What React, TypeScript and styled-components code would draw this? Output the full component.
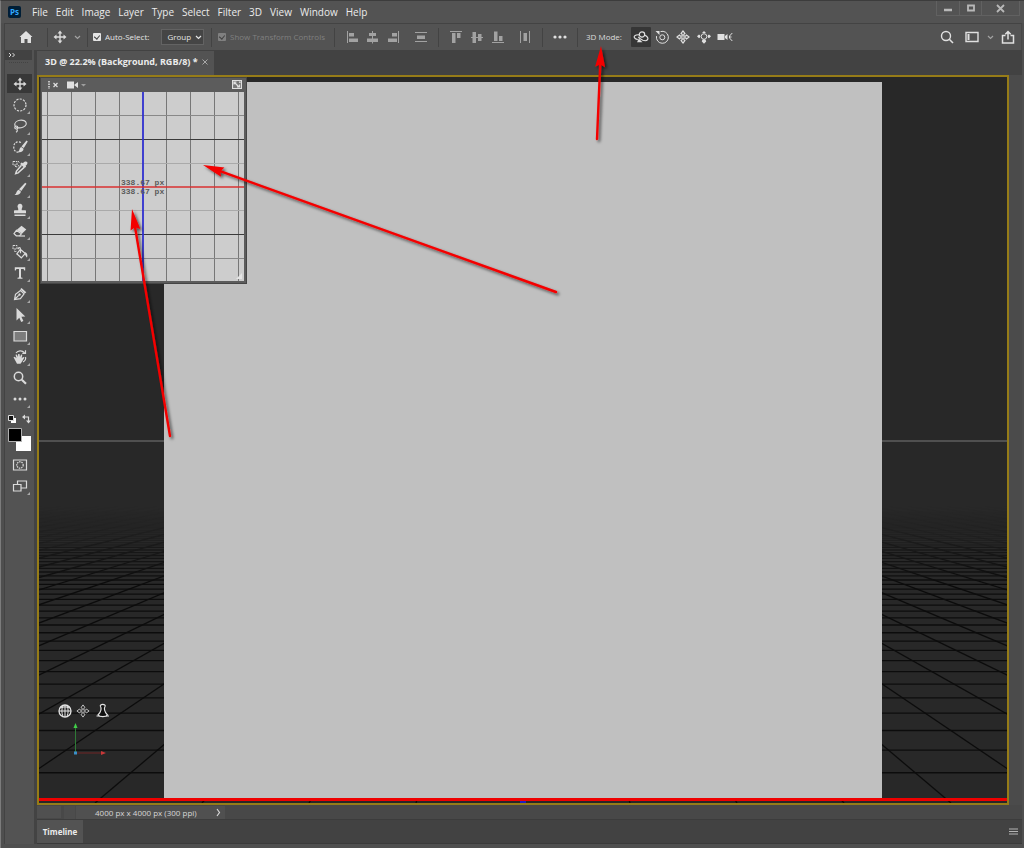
import React from "react";
import styled, { createGlobalStyle } from "styled-components";

const GlobalStyle = createGlobalStyle`
  *, *::before, *::after { box-sizing: border-box; }
  body { margin: 0; background: #4b4b4b; }
  button, input, select { font: inherit; color: inherit; }
`;

const uiFont = `"Open Sans", "Noto Sans", sans-serif`;

const Window = styled.div`
  position: relative;
  min-height: 100vh;
  display: flex;
  flex-direction: column;
  background: #4f4f4f;
  border-left: 1px solid #7c7c7c;
  border-top: 1px solid #3c3c3c;
  font-family: ${uiFont};
  font-size: 8px;
  line-height: 12px;
  color: #dcdcdc;
  overflow: hidden;
`;

const TitleBar = styled.header`
  display: flex;
  align-items: center;
  height: 22px;
  padding: 0 4px 0 7px;
  background: #535353;
`;

const Logo = styled.div`
  width: 13px;
  height: 12px;
  border-radius: 2px;
  background: #001e36;
  color: #31a8ff;
  font-size: 8px;
  font-weight: 700;
  line-height: 11px;
  text-align: center;
`;

const Menu = styled.nav`
  display: flex;
  gap: 8px;
  margin-left: 11px;
  font-size: 10px;
  line-height: 14px;
`;

const MenuItem = styled.button`
  padding: 0;
  border: 0;
  background: none;
  color: #ececec;
`;

const WindowControls = styled.div`
  display: flex;
  align-self: flex-start;
  margin-left: auto;
  height: 15px;
  border: 1px solid #616161;
  border-top: 0;
`;

const WindowButton = styled.button<{ $w: number }>`
  display: grid;
  place-items: center;
  width: ${(p) => p.$w}px;
  padding: 0;
  border: 0;
  background: none;
  color: #b8b8b8;
  & + & { border-left: 1px solid #616161; }
`;

const OptionsBar = styled.div`
  display: flex;
  align-items: center;
  height: 27px;
  margin: 0 2px 0 3px;
  background: #535353;
  border-top: 1px solid #434343;
  border-left: 1px solid #434343;
  border-right: 1px solid #484848;
`;

const Separator = styled.span`
  flex: none;
  width: 1px;
  height: 19px;
  background: #434343;
`;

const IconButton = styled.button<{ $w: number; $active?: boolean; $dim?: boolean }>`
  flex: none;
  display: grid;
  place-items: center;
  width: ${(p) => p.$w}px;
  height: 20px;
  padding: 0;
  border: 0;
  border-radius: 1px;
  background: ${(p) => (p.$active ? "#363636" : "none")};
  color: ${(p) => (p.$dim ? "#a2a2a2" : "#e0e0e0")};
`;

const Group = styled.div<{ $w: number; $pad?: number }>`
  flex: none;
  display: flex;
  align-items: center;
  width: ${(p) => p.$w}px;
  padding-left: ${(p) => p.$pad ?? 0}px;
`;

const CheckLabel = styled.label<{ $off?: boolean }>`
  display: flex;
  align-items: center;
  gap: 4px;
  white-space: nowrap;
  color: ${(p) => (p.$off ? "#808080" : "#e4e4e4")};
`;

const CheckBox = styled.input`
  appearance: none;
  position: relative;
  width: 8px;
  height: 8px;
  margin: 0;
  border-radius: 1px;
  background: currentColor;
  &::after {
    content: "";
    position: absolute;
    left: 2px;
    top: 1px;
    width: 4px;
    height: 5px;
    border: solid #404040;
    border-width: 0 1px 1px 0;
    transform: rotate(40deg);
  }
`;

const SelectWrap = styled.div`
  position: relative;
  margin-left: 12px;
  color: #e4e4e4;
  svg { position: absolute; right: 2px; top: 6px; pointer-events: none; }
`;

const Select = styled.select`
  appearance: none;
  display: block;
  width: 43px;
  height: 16px;
  padding: 0 0 0 5px;
  border: 1px solid #636363;
  background: #454545;
`;

const RightGroup = styled.div`
  display: flex;
  align-items: center;
  margin-left: auto;
`;

const Body = styled.div`
  flex: 1;
  display: flex;
  margin: 0 2px 4px 3px;
`;

const Tools = styled.aside`
  flex: none;
  display: flex;
  flex-direction: column;
  width: 33px;
  padding-right: 2px;
  background: #535353;
  border-left: 1px solid #434343;
  border-right: 3px solid #434343;
`;

const ToolsHeader = styled.button`
  height: 10px;
  padding: 0 0 0 3px;
  border: 0;
  background: #424242;
  text-align: left;
  line-height: 0;
`;

const Grip = styled.div`
  height: 3px;
  margin: 2px 4px 9px;
  border-top: 1px dotted #434343;
`;

const ToolList = styled.div`
  display: flex;
  flex-direction: column;
  gap: 2px;
  padding-left: 2px;
`;

const ToolButton = styled.button<{ $active?: boolean; $more?: boolean }>`
  position: relative;
  display: grid;
  place-items: center;
  width: 25px;
  height: 19px;
  padding: 0;
  border: 0;
  background: ${(p) => (p.$active ? "#383838" : "none")};
  color: #dadada;
  &::after {
    content: "";
    display: ${(p) => (p.$more ? "block" : "none")};
    position: absolute;
    right: 2px;
    bottom: 0;
    border-left: 3px solid transparent;
    border-bottom: 3px solid #a8a8a8;
  }
`;

const Swatches = styled.div`
  height: 41px;
  margin-bottom: 2px;
  svg { display: block; }
`;

const Main = styled.main`
  flex: 1;
  min-width: 0;
  display: flex;
  flex-direction: column;
  background: #424242;
`;

const TabBar = styled.div`
  display: flex;
  height: 25px;
  padding-top: 1px;
  background: #424242;
`;

const DocTab = styled.div`
  display: flex;
  align-items: center;
  gap: 4px;
  padding: 0 6px 2px 8px;
  background: #535353;
  color: #ececec;
  font-weight: 700;
  font-size: 9px;
  white-space: nowrap;
`;

const CloseButton = styled.button`
  padding: 0;
  border: 0;
  background: none;
  line-height: 0;
  color: #a8a8a8;
`;

const Workspace = styled.div`
  flex: 1;
  display: flex;
`;

const Viewport = styled.section`
  position: relative;
  flex: 1;
  display: flex;
  min-width: 0;
  padding: 5px 125px;
  border: 2px solid #967c18;
  background: #282828;
`;

const Floor = styled.svg`
  position: absolute;
  inset: 0;
  width: 100%;
  height: 100%;
`;

const Page = styled.div`
  position: relative;
  flex: 1;
  background: #c0c0c0;
`;

const ScrollTrack = styled.div`
  flex: none;
  width: 13px;
  background: #4b4b4b;
`;

const SecondaryView = styled.div`
  position: absolute;
  left: 1px;
  top: 0;
  width: 207px;
  padding: 1px 2px 2px 1px;
  background: #5c5c5c;
  border: 1px solid #454545;
`;

const ViewHeader = styled.div`
  display: flex;
  align-items: center;
  height: 13px;
  padding: 0 2px 2px 5px;
  color: #e0e0e0;
`;

const ViewButton = styled.button<{ $push?: boolean; $gap?: number }>`
  padding: 0;
  border: 0;
  background: none;
  line-height: 0;
  margin-left: ${(p) => (p.$push ? "auto" : `${p.$gap ?? 0}px`)};
`;

const ViewCanvas = styled.div`
  position: relative;
  height: 189px;
  background: #cdcdcd;
  svg { display: block; }
`;

const Dimensions = styled.div`
  position: absolute;
  left: 79px;
  top: 86px;
  color: #5a5a5a;
  font-family: "Liberation Mono", monospace;
  font-size: 8px;
  font-weight: 700;
  line-height: 9px;
`;

const NavWidget = styled.div`
  position: absolute;
  left: 17px;
  bottom: 42px;
`;

const StatusBar = styled.footer`
  display: flex;
  height: 15px;
  padding-top: 1px;
  background: #484848;
  border-bottom: 1px solid #3c3c3c;
`;

const ZoomField = styled.input`
  width: 24px;
  height: 12px;
  padding: 0;
  border: 0;
  background: #505050;
`;

const StatusGap = styled.span`
  width: 11px;
  margin-left: 3px;
  background: #4d4d4d;
`;

const DocInfo = styled.button`
  display: flex;
  align-items: center;
  justify-content: space-between;
  width: 149px;
  height: 13px;
  padding: 0 4px 0 19px;
  margin-left: 1px;
  border: 0;
  background: #505050;
  color: #d6d6d6;
  white-space: nowrap;
`;

const Timeline = styled.div`
  display: flex;
  align-items: center;
  height: 24px;
  padding-right: 4px;
  background: #424242;
  border-bottom: 1px solid #3a3a3a;
`;

const TimelineTab = styled.button`
  align-self: stretch;
  width: 46px;
  padding: 0;
  border: 0;
  background: #535353;
  color: #ececec;
  font-weight: 700;
`;

const PanelMenu = styled.button`
  margin-left: auto;
  padding: 0;
  border: 0;
  background: none;
  line-height: 0;
  color: #b4b4b4;
`;

const Annotations = styled.svg`
  position: absolute;
  left: -1px;
  top: -1px;
  pointer-events: none;
`;

type DrawingProps = { w?: number; h?: number; children: React.ReactNode };

const Icon = ({ w = 16, h = 16, children }: DrawingProps) => (
  <svg width={w} height={h} viewBox={`0 0 ${w} ${h}`} fill="none" stroke="currentColor" strokeWidth="1.2" aria-hidden="true">
    {children}
  </svg>
);

const Chevron = () => (
  <Icon w={7} h={5}><path d="M1 1l2.500 2.500L6 1" /></Icon>
);

const MoveGlyph = () => (
  <>
    <path d="M8 3v10M3 8h10" strokeWidth="1.400" />
    <path d="M8 1.500l2.400 3H5.600zM8 14.500l2.400-3H5.600zM1.500 8l3-2.400v4.800zM14.500 8l-3-2.400v4.800z" fill="currentColor" stroke="none" />
  </>
);

const solid = { fill: "currentColor", stroke: "none" };

const toolIcons: { name: string; more?: boolean; art: React.ReactNode }[] = [
  { name: "Move", art: <MoveGlyph /> },
  { name: "Elliptical Marquee", more: true, art: <circle cx="8" cy="8" r="6" strokeDasharray="2.200 1.200" /> },
  {
    name: "Lasso", more: true,
    art: (
      <>
        <ellipse cx="8.500" cy="6" rx="5.800" ry="3.800" transform="rotate(-10 8.500 6)" />
        <circle cx="4.300" cy="9.500" r="1.500" />
        <path d="M4.800 11c.9 1.200.6 2.600-.8 3.300" />
      </>
    ),
  },
  {
    name: "Quick Selection", more: true,
    art: (
      <>
        <path d="M6.500 13C3.500 13.500 1.500 11 1.800 7.500 2 4.500 4 2.800 6.500 2.800c1.300 0 2.200.5 2.700 1.300" strokeDasharray="2 1.200" />
        <path {...solid} d="M14.500 1.600l1.300 1-4 6.500-2.300-1.700zM9.200 7.900l2.400 1.800c-.2 2.400-2.600 4.200-5.800 3.300 1.700-.8 1.400-4.100 3.400-5.100z" />
      </>
    ),
  },
  {
    name: "Eyedropper", more: true,
    art: (
      <>
        <path {...solid} d="M11 3.200c1-1.900 3.400-2.200 4.200-1.100.7 1.100-.1 2.900-1.600 3.700l.5.900-1.500 1.400-4.500-4.200 1.500-1.500z" />
        <path d="M9.500 5.300l-5 5.800-.8 2.600 2.400-.8 6-5.500" strokeWidth="1.500" />
        <path d="M1 1.500h4v3.500H1zM3 6.200c2 1.300 3.800.5 4-1.500M6 1l1.500 2" strokeDasharray="2 .8" strokeWidth="1" />
      </>
    ),
  },
  {
    name: "Brush", more: true,
    art: <path {...solid} d="M13.200 1.800l1.300 1-5.200 7.200-2.300-1.800zM6.700 8.700l2.200 1.700c-.3 2.500-2.900 4.100-6.500 3.400 2.200-.7 1.900-4.200 4.300-5.100z" />,
  },
  {
    name: "Clone Stamp", more: true,
    art: <path {...solid} d="M8 1.800a2.500 2.500 0 0 1 2.300 3.500c-.5 1.300-.7 2-.5 3H13c.7 0 1 .4 1 1v2H2V9.300c0-.6.3-1 1-1h3.200c.2-1 0-1.700-.5-3A2.500 2.500 0 0 1 8 1.800zM2.500 12.600h11V14h-11z" />,
  },
  {
    name: "Eraser", more: true,
    art: (
      <>
        <path {...solid} d="M9.500 2.800l4.800 3.600-4.200 4.200L4.600 7z" />
        <path d="M4.400 7.300l5 3.500-2 2H4.300L2 10.600z" />
        <path d="M7.500 13h5.500" />
      </>
    ),
  },
  {
    name: "Paint Bucket", more: true,
    art: (
      <>
        <path d="M8.300 5.300l5 4.200-4 4.300-4.500-4zM8.500 9.300V5.200c0-2-2.300-2-2.300 0" />
        <path {...solid} d="M12.700 8.300c2.300.3 3.300 2.500 2.300 5.300-1-.1-1.500-2.500-2.500-3.500z" />
        <path d="M1 1.500h4v3.500H1zM2 6.800c1 .9 2 .9 3 .2" strokeDasharray="2 .8" strokeWidth="1" />
      </>
    ),
  },
  {
    name: "Type", more: true,
    art: <path {...solid} d="M2.800 2.300h10.400v3.200h-1c-.2-1.200-.6-1.600-1.700-1.600H9v7.900c0 .8.400 1 1.500 1v1h-5v-1c1.100 0 1.500-.2 1.500-1V3.900H5.500c-1.100 0-1.500.4-1.700 1.600h-1z" />,
  },
  {
    name: "Pen", more: true,
    art: (
      <>
        <path d="M2.500 13.500l1-5.200 5-3.800 3.600 3.300-3.700 4.900zM2.500 13.500l4.200-4.200" />
        <path {...solid} d="M9.500 2l4.800 4.300-1.400 1.300-4.700-4.300zM6.500 8a1.200 1.200 0 1 1 1.500 1.700A1.200 1.200 0 0 1 6.500 8z" />
      </>
    ),
  },
  { name: "Path Selection", more: true, art: <path {...solid} d="M4.500 1l8.800 8.500-3.900.3 2 4.100-2.200 1-1.900-4.100L4.500 13.400z" /> },
  { name: "Rectangle", more: true, art: <path d="M2 3.500h12.500v9.500H2z" fill="#7c7c7c" /> },
  {
    name: "Rotate View", more: true,
    art: (
      <>
        <path {...solid} d="M1.500 8.200l1.200-.5 1.800 1.500-1-3.400 1.300-.3 1.200 2.500.1-3 1.400-.1.500 3 1.100-2.500 1.200.4-.6 3.400 1.500-1.300 1.300.6-2.900 4.800-1.100 1.500H5z" />
        <path d="M4 4c2-2.500 6-3 8.500-.3M13.500 1.200v3.200h-3.200M13.500 8c.5 2-.5 4-2.500 5" />
      </>
    ),
  },
  {
    name: "Zoom",
    art: (
      <>
        <circle cx="6.500" cy="6.500" r="4.200" strokeWidth="1.500" />
        <path d="M9.800 9.800l4.200 4" strokeWidth="2.200" />
      </>
    ),
  },
  {
    name: "Edit Toolbar", more: true,
    art: (
      <g {...solid}>
        <circle cx="3" cy="8" r="1.500" /><circle cx="8" cy="8" r="1.500" /><circle cx="13" cy="8" r="1.500" />
      </g>
    ),
  },
];

const alignIcons: { name: string; w: number; d: string }[] = [
  { name: "Align left edges", w: 20, d: "M1 1h1v12H1zM3 3h5v3.500H3zM3 8.500h9V12H3z" },
  { name: "Align horizontal centers", w: 21, d: "M6 1h1v2h3v3H7v2.500h5V12H7v1.500H6V12H1V8.500h5V6H3V3h3z" },
  { name: "Align right edges", w: 20, d: "M11 1h1v12h-1zM5 3h5v3.500H5zM1 8.500h9V12H1z" },
  { name: "Distribute vertically", w: 35, d: "M1 2h12v1H1zM3 5.500h8V9H3zM1 11h12v1H1z" },
];

const alignIcons2: { name: string; w: number; d: string }[] = [
  { name: "Align top edges", w: 20, d: "M1 1h12v1H1zM3 3h3.500v10H3zM8 3h3.500v5H8z" },
  { name: "Align vertical centers", w: 22, d: "M1 7h1.500V2H6v5h2V4h3.500v3H13v1h-1.500v3H8V8H6v5H2.500V8H1z" },
  { name: "Align bottom edges", w: 20, d: "M1 12h12v1H1zM3 1.500h3.500V11H3zM8 6h3.500v5H8z" },
  { name: "Distribute horizontally", w: 35, d: "M2 1h1v12H2zM5.500 3H9v8H5.500zM11 1h1v12h-1z" },
];

const PanCross = () => (
  <>
    <path d="M6.200 6.200V4.300L5 3.600 7 .9l2 2.700-1.200.7v1.900h1.900L10.400 5l2.700 2-2.700 2-.7-1.200H7.800v1.900l1.200.7-2 2.700-2-2.700 1.200-.7V7.800H4.300L3.600 9 .9 7l2.700-2 .7 1.200z" strokeLinejoin="round" />
  </>
);

const modeIcons: { name: string; w: number; active?: boolean; art: React.ReactNode }[] = [
  {
    name: "Orbit", w: 20, active: true,
    art: (
      <Icon w={16} h={14}>
        <circle cx="9" cy="4.500" r="2.700" />
        <path d="M6 4.800C2.500 4.500.700 6 1.300 7.500c.4 1 1.700 1.700 3.500 2.200M12 5.200c2.400 1.200 3.500 3 2.600 4.500-1 1.300-3 1.200-4.800.6-2-.8-3.500-2-4.500-3.400" />
        <path {...solid} d="M4 12.300h5.500L5.800 8.500z" />
      </Icon>
    ),
  },
  {
    name: "Roll", w: 22,
    art: (
      <Icon w={14} h={14}>
        <circle cx="7.300" cy="7.300" r="2.500" strokeWidth="1" />
        <path d="M5.500 1.600a6 6 0 1 1-4 4.500" strokeWidth="1" />
        <path {...solid} d="M.5 1h4v4z" />
      </Icon>
    ),
  },
  { name: "Pan", w: 20, art: <Icon w={14} h={14}><PanCross /></Icon> },
  {
    name: "Slide", w: 22,
    art: (
      <Icon w={14} h={14}>
        <circle cx="7" cy="6.500" r="2.800" strokeWidth="1" />
        <path {...solid} d="M7 1l2 2H5zM7 13.800L4.800 11.500a2.200 2.200 0 0 1 4.400 0zM0 6.300L2 4.400a2 2 0 0 1 0 3.800zM14 6.300l-2-1.900a2 2 0 0 0 0 3.800z" />
      </Icon>
    ),
  },
  {
    name: "Zoom camera", w: 20,
    art: (
      <Icon w={16} h={14}>
        <path {...solid} d="M.5 4h7v6h-7zM8 6l2.500-2v6L8 8z" />
        <path d="M15.300 3L12.500 6v2l2.800 3M12.500 7h2" strokeWidth="1" />
      </Icon>
    ),
  },
];

const HORIZON = 364;
const CENTER = 484;
const depthRows = Array.from({ length: 52 }, (_, k) => HORIZON + 4545 / (12.7 + k));
const rays = Array.from({ length: 61 }, (_, k) => k - 30);

const FloorGrid = () => (
  <Floor viewBox="0 0 968 726" preserveAspectRatio="xMidYMin slice" aria-hidden="true">
    <defs>
      <linearGradient id="fog" x1="0" y1="0" x2="0" y2="1">
        <stop offset="0.180" stopColor="#fff" stopOpacity="0" />
        <stop offset="0.300" stopColor="#fff" stopOpacity="0.550" />
        <stop offset="0.400" stopColor="#fff" stopOpacity="1" />
      </linearGradient>
      <mask id="distance" maskUnits="userSpaceOnUse" x="0" y="364" width="968" height="362">
        <rect y="364" width="968" height="362" fill="url(#fog)" />
      </mask>
    </defs>
    <g mask="url(#distance)" stroke="#0c0c0c" strokeWidth="1.300">
      {depthRows.map((y) => (
        <line key={y} x1="0" x2="968" y1={y} y2={y} strokeOpacity={y > 470 ? 1 : 0.600} />
      ))}
      {rays.map((k) => (
        <line key={k} x1={CENTER} y1={HORIZON} x2={CENTER + k * 107} y2="726" strokeOpacity={Math.abs(k) > 14 ? 0.600 : 1} />
      ))}
    </g>
    <path d="M0 364h968" stroke="#5e5e5e" strokeWidth="1.500" />
    <path d="M0 722.500h968" stroke="#ee0000" strokeWidth="3" />
    <path d="M481 725h6" stroke="#2020c0" strokeWidth="2" />
  </Floor>
);

const Arrow = ({ tip, tail }: { tip: [number, number]; tail: [number, number] }) => {
  const dx = tail[0] - tip[0];
  const dy = tail[1] - tip[1];
  const length = Math.hypot(dx, dy);
  const angle = (Math.atan2(dy, dx) * 180) / Math.PI;
  return (
    <g filter="url(#arrowShadow)">
      <g transform={`translate(${tip[0]} ${tip[1]}) rotate(${angle})`}>
        <path d={`M16 0H${length}`} stroke="#f40000" strokeWidth="2.400" strokeLinecap="round" />
        <path d="M0 0L21-5 18.500 0 21 5z" fill="#f40000" />
      </g>
    </g>
  );
};

export default function App() {
  return (
    <>
      <GlobalStyle />
      <Window>
        <TitleBar>
          <Logo>Ps</Logo>
          <Menu>
            {["File", "Edit", "Image", "Layer", "Type", "Select", "Filter", "3D", "View", "Window", "Help"].map((m) => (
              <MenuItem key={m}>{m}</MenuItem>
            ))}
          </Menu>
          <WindowControls>
            <WindowButton $w={22} aria-label="Minimize"><Icon w={10} h={10}><path d="M1 7h8" strokeWidth="2.500" /></Icon></WindowButton>
            <WindowButton $w={22} aria-label="Maximize"><Icon w={10} h={8}><path d="M2 1.500h6v5H2z" strokeWidth="1.800" /></Icon></WindowButton>
            <WindowButton $w={38} aria-label="Close"><Icon w={9} h={9}><path d="M1 1l7 7M8 1L1 8" strokeWidth="1.800" /></Icon></WindowButton>
          </WindowControls>
        </TitleBar>

        <OptionsBar>
          <IconButton $w={42} aria-label="Home">
            <Icon w={14} h={14}><path {...solid} d="M7 1l6.500 6H12v6H8.500V9h-3v4H2V7H.5z" /></Icon>
          </IconButton>
          <Separator />
          <Group $w={39} $pad={4}>
            <Icon><MoveGlyph /></Icon>
            <IconButton $w={18} $dim aria-label="Tool presets"><Chevron /></IconButton>
          </Group>
          <Separator />
          <Group $w={123} $pad={5}>
            <CheckLabel><CheckBox type="checkbox" defaultChecked />Auto-Select:</CheckLabel>
            <SelectWrap>
              <Select aria-label="Auto-select target"><option>Group</option></Select>
              <Chevron />
            </SelectWrap>
          </Group>
          <Separator />
          <Group $w={122} $pad={6}>
            <CheckLabel $off><CheckBox type="checkbox" defaultChecked disabled />Show Transform Controls</CheckLabel>
          </Group>
          <Separator />
          <Group $w={103} $pad={7}>
            {alignIcons.map((a) => (
              <IconButton key={a.name} $w={a.w} $dim aria-label={a.name}><Icon w={13} h={14}><path {...solid} d={a.d} /></Icon></IconButton>
            ))}
          </Group>
          <Separator />
          <Group $w={103} $pad={6}>
            {alignIcons2.map((a) => (
              <IconButton key={a.name} $w={a.w} $dim aria-label={a.name}><Icon w={13} h={14}><path {...solid} d={a.d} /></Icon></IconButton>
            ))}
          </Group>
          <Separator />
          <IconButton $w={34} aria-label="More options">
            <Icon w={14} h={4}><g {...solid}><circle cx="2" cy="2" r="1.600" /><circle cx="7" cy="2" r="1.600" /><circle cx="12" cy="2" r="1.600" /></g></Icon>
          </IconButton>
          <Separator />
          <Group $w={53} $pad={8}>3D Mode:</Group>
          {modeIcons.map((m) => (
            <IconButton key={m.name} $w={m.w} $active={m.active} aria-label={m.name}>{m.art}</IconButton>
          ))}
          <RightGroup>
            <IconButton $w={24} aria-label="Search"><Icon w={14} h={14}><circle cx="6" cy="6" r="4.500" strokeWidth="1.400" /><path d="M9.300 9.300l3.700 3.700" strokeWidth="1.600" /></Icon></IconButton>
            <IconButton $w={26} aria-label="Workspace"><Icon w={14} h={12}><path d="M1 1.500h12v9H1z" strokeWidth="1.400" /><path {...solid} d="M2.500 3h2v6h-2z" /></Icon></IconButton>
            <IconButton $w={10} $dim aria-label="Workspace list"><Chevron /></IconButton>
            <IconButton $w={26} aria-label="Share"><Icon w={14} h={14}><path d="M4.500 5.500H1.500V13h11V5.500H9.500M7 9.500V2M4.300 4.300L7 1.600l2.700 2.700" strokeWidth="1.500" /></Icon></IconButton>
          </RightGroup>
        </OptionsBar>

        <Body>
          <Tools>
            <ToolsHeader aria-label="Expand tools"><Icon w={8} h={6}><path d="M1 1l2 2-2 2M4.500 1l2 2-2 2" strokeWidth="1" /></Icon></ToolsHeader>
            <Grip />
            <ToolList>
              {toolIcons.map((t, i) => (
                <ToolButton key={t.name} $active={i === 0} $more={t.more} aria-label={t.name}><Icon>{t.art}</Icon></ToolButton>
              ))}
              <Swatches>
                <svg width="25" height="41" viewBox="0 -1 25 41" aria-hidden="true">
                  <path d="M4 7h5v5H4z" fill="#fff" />
                  <path d="M1.500 4.500h5v5h-5z" fill="#111" stroke="#ddd" />
                  <path d="M17 6h4.500v4" fill="none" stroke="#ddd" strokeWidth="1.200" />
                  <path d="M18 3.500v5L15 6zM19 9.500h5L21.500 12.500z" fill="#ddd" />
                  <path d="M9 25h15v15H9z" fill="#fff" />
                  <path d="M1.500 17.500h13v13h-13z" fill="#000" stroke="#b0b0b0" />
                </svg>
              </Swatches>
              <ToolButton aria-label="Quick Mask"><Icon><path d="M1.500 3h13v10h-13z" /><circle cx="8" cy="8" r="3.200" strokeDasharray="1.500 .8" /></Icon></ToolButton>
              <ToolButton $more aria-label="Screen Mode"><Icon><path d="M5.500 3h9v7h-9z" /><path d="M1.500 6.500h7.500v6.500H1.500z" fill="#535353" /></Icon></ToolButton>
            </ToolList>
          </Tools>

          <Main>
            <TabBar>
              <DocTab>
                <span>3D @ 22.2% (Background, RGB/8) *</span>
                <CloseButton aria-label="Close document"><Icon w={6} h={6}><path d="M.5.5l5 5M5.500.5l-5 5" strokeWidth="1" /></Icon></CloseButton>
              </DocTab>
            </TabBar>

            <Workspace>
              <Viewport aria-label="3D view">
                <FloorGrid />
                <Page />
                <SecondaryView>
                  <ViewHeader>
                    <ViewButton aria-label="Close view"><Icon w={12} h={8}><path d="M2 0v8" strokeDasharray="1.500 1" strokeWidth="1.500" /><path d="M6.500 2l4 4M10.500 2l-4 4" /></Icon></ViewButton>
                    <ViewButton $gap={8} aria-label="Camera"><Icon w={20} h={8}><path {...solid} d="M0 .5h7v7H0zM7 4l4-3v6z" /><path {...solid} d="M14 3h5l-2.500 2.500z" opacity=".5" /></Icon></ViewButton>
                    <ViewButton $push aria-label="Swap views"><Icon w={10} h={9}><path d="M.5.5h9v8h-9z" fill="#777" /><path d="M2 2l5 5M2 4.500V2h2.500M7.500 4.500V7H5M7 2h1v1" /></Icon></ViewButton>
                  </ViewHeader>
                  <ViewCanvas>
                    <svg width="100%" height="189" viewBox="0 0 202 189" preserveAspectRatio="none" fill="none" aria-hidden="true">
                      <path d="M5.500 0v189M29.500 0v189M53.500 0v189M77.500 0v189M124.500 0v189M148.500 0v189M172.500 0v189M196.500 0v189" stroke="#777" />
                      <path d="M0 23.500h202M0 166.500h202" stroke="#888" />
                      <path d="M0 71.500h202M0 118.500h202" stroke="#aaa" />
                      <path d="M0 47.500h202M0 142.500h202" stroke="#3a3a3a" />
                      <path d="M101 0v189" stroke="#3030d0" strokeWidth="1.800" />
                      <path d="M0 95h202" stroke="#d83030" strokeWidth="1.600" />
                      <path d="M200 181v6h-6z" fill="#e4e4e4" />
                    </svg>
                    <Dimensions>338.67 px<br />338.67 px</Dimensions>
                  </ViewCanvas>
                </SecondaryView>
                <NavWidget>
                  <svg width="60" height="56" viewBox="0 0 60 56" fill="none" stroke="#e4e4e4" aria-hidden="true">
                    <circle cx="9" cy="9" r="6" strokeWidth="1.300" />
                    <path d="M3 9h12M9 3v12M4.500 6c3-1.500 6-1.500 9 0M7 3.500C5.500 7 5.500 11 7 14.500M11 3.500c1.500 3.500 1.500 7.500 0 11" />
                    <g transform="translate(20 2)" stroke="#bdbdbd"><PanCross /></g>
                    <path d="M44.500 4.500c-1.500-2.800 6-2.800 4.500 0-1 1.500-1 5 2.500 8.500-1.500 2.200-8 2.200-9.500 0 3.500-3.500 3.500-7 2.500-8.500z" fill="#101010" strokeWidth="1.200" />
                    <path d="M40.500 14h3M50 14h3" />
                    <path d="M19.500 26v24" stroke="#2e7a36" />
                    <path d="M19.500 21l2 5h-4z" fill="#40d048" stroke="none" />
                    <path d="M20 51h25" stroke="#6e2525" />
                    <path d="M45 49l5 2-5 2z" fill="#c83838" stroke="none" />
                    <path d="M18 49.500h3v3h-3z" fill="#3a90c8" stroke="none" />
                  </svg>
                </NavWidget>
              </Viewport>
              <ScrollTrack />
            </Workspace>

            <StatusBar>
              <ZoomField aria-label="Zoom level" />
              <StatusGap />
              <DocInfo>
                <span>4000 px x 4000 px (300 ppi)</span>
                <Icon w={5} h={9}><path d="M1 1l2.500 3.500L1 8" /></Icon>
              </DocInfo>
            </StatusBar>
            <Timeline>
              <TimelineTab>Timeline</TimelineTab>
              <PanelMenu aria-label="Panel menu"><Icon w={9} h={7}><path d="M0 1h9M0 3.500h9M0 6h9" /></Icon></PanelMenu>
            </Timeline>
          </Main>
        </Body>

        <Annotations width="1024" height="848" viewBox="0 0 1024 848" aria-hidden="true">
          <defs>
            <filter id="arrowShadow" filterUnits="userSpaceOnUse" x="0" y="0" width="1024" height="848">
              <feDropShadow dx="2" dy="2" stdDeviation="1.500" floodColor="#000" floodOpacity="0.600" />
            </filter>
          </defs>
          <Arrow tip={[601, 46]} tail={[597, 139]} />
          <Arrow tip={[203, 165]} tail={[556, 292]} />
          <Arrow tip={[132, 209]} tail={[170, 436]} />
        </Annotations>
      </Window>
    </>
  );
}
